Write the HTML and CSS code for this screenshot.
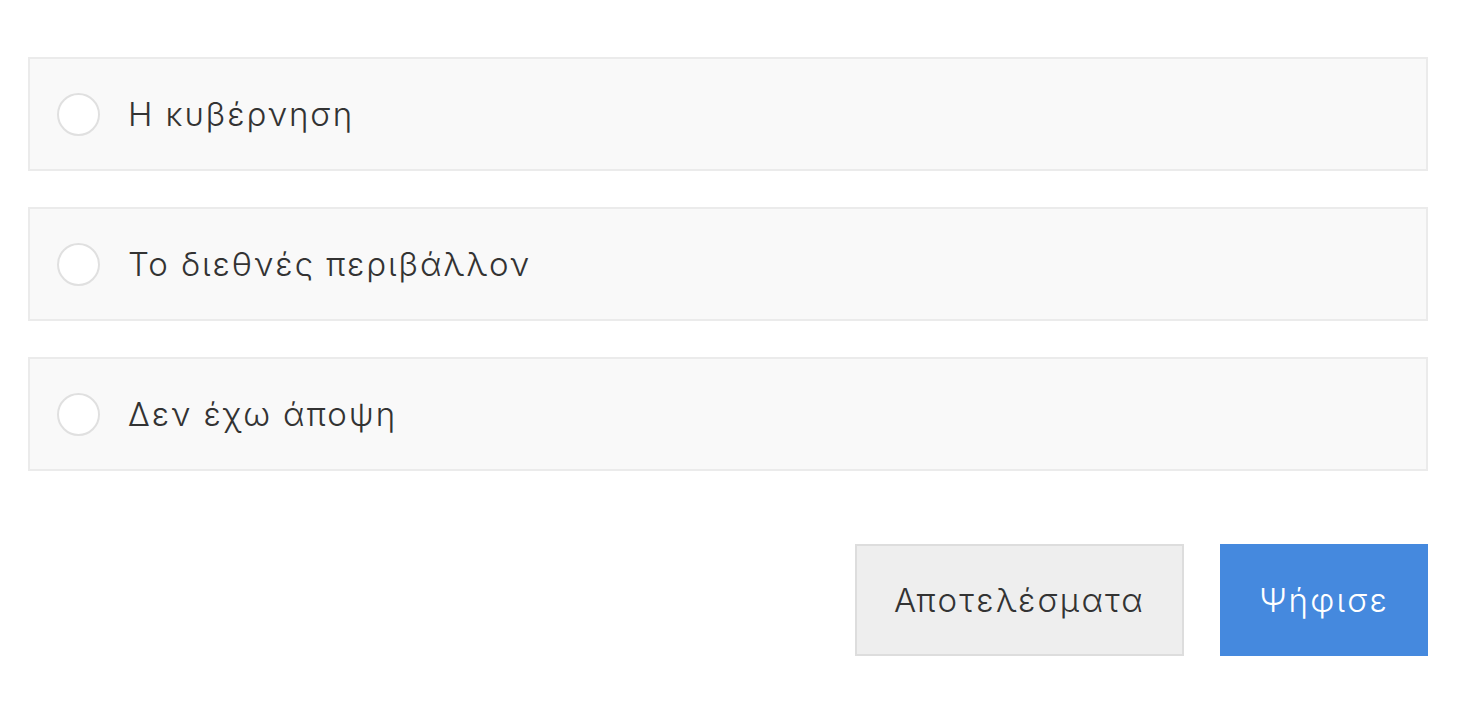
FILE: index.html
```html
<!DOCTYPE html>
<html lang="el">
<head>
<meta charset="utf-8">
<link rel="stylesheet" href="styles.css">
</head>
<body>
<form class="poll">
  <label class="option"><span class="radio"></span><span class="option-text">Η κυβέρνηση</span></label>
  <label class="option"><span class="radio"></span><span class="option-text">Το διεθνές περιβάλλον</span></label>
  <label class="option"><span class="radio"></span><span class="option-text">Δεν έχω άποψη</span></label>
  <div class="actions">
    <button type="button" class="btn btn-results">Αποτελέσματα</button>
    <button type="button" class="btn btn-vote">Ψήφισε</button>
  </div>
</form>
</body>
</html>
```
FILE: styles.css
```css
html, body {
  margin: 0;
  padding: 0;
  background: #fff;
}
body {
  font-family: "Inter", "Noto Sans", "DejaVu Sans", sans-serif;
  font-weight: 300;
  color: #333;
}
.poll {
  width: 1400px;
  padding: 57px 0 0 28px;
  display: flex;
  flex-direction: column;
  gap: 36px;
}
.option {
  box-sizing: border-box;
  height: 114px;
  background: #f9f9f9;
  border: 2px solid #ebebeb;
  display: flex;
  align-items: center;
  padding-left: 27px;
  gap: 28px;
}
.radio {
  box-sizing: border-box;
  width: 43px;
  height: 43px;
  border-radius: 50%;
  border: 2px solid #e0e0e0;
  background: #fff;
  flex: none;
}
.option-text {
  font-size: 33px;
  letter-spacing: 1.9px;
}
.actions {
  margin-top: 37px;
  display: flex;
  justify-content: flex-end;
  gap: 36px;
}
.btn {
  box-sizing: border-box;
  height: 112px;
  font-family: inherit;
  font-weight: 300;
  font-size: 33px;
  letter-spacing: 2.2px;
  border-radius: 0;
  cursor: pointer;
}
.btn-results {
  width: 329px;
  background: #eee;
  border: 2px solid #ddd;
  color: #333;
}
.btn-vote {
  width: 208px;
  background: #4589de;
  border: none;
  color: #fff;
}
```
